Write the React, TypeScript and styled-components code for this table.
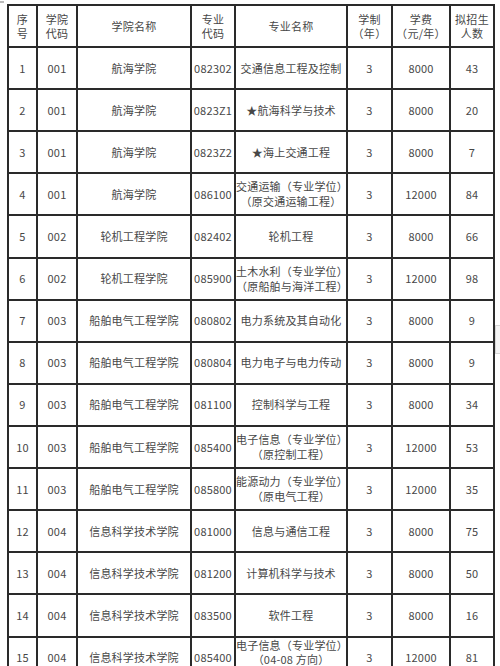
import styled, { createGlobalStyle } from 'styled-components';

const GlobalStyle = createGlobalStyle`
    html, body {
        margin: 0;
        padding: 0;
        background: #ffffff;
    }
    body {
        font-family: "Noto Sans CJK SC", "Noto Sans", sans-serif;
        color: #474747;
        overflow: hidden;
    }
`

const Page = styled.div`
    position: relative;
    width: 500px;
    height: 666px;
    padding: 4px 0 0 7px;
    box-sizing: border-box;
    overflow: hidden;
`

const Table = styled.table`
    border-collapse: collapse;
    table-layout: fixed;
    width: 486px;
    font-size: 11px;
`

const HeadCell = styled.th`
    border: 2px solid #2a2a2a;
    height: 42px;
    padding: 0;
    font-weight: 400;
    line-height: 14px;
    text-align: center;
    vertical-align: middle;
    white-space: pre;
    letter-spacing: 0.3px;
    box-sizing: border-box;
`

const Cell = styled.td<{ $lift?: boolean }>`
    border: 2px solid #2a2a2a;
    height: 42.12px;
    padding: 0;
    line-height: ${p => (p.$lift ? '14px' : '15px')};
    text-align: center;
    vertical-align: ${p => (p.$lift ? 'top' : 'middle')};
    white-space: pre;
    letter-spacing: 0.2px;
    box-sizing: border-box;
`

const Row = styled.tr``

const SideTab = styled.div`
    position: absolute;
    left: 495px;
    top: 325px;
    width: 10px;
    height: 27px;
    border: 1px solid #d6d6d6;
    background: #f4f4f4;
`

const Corner = styled.div`
    position: absolute;
    left: 0;
    top: 1px;
    width: 4px;
    height: 2px;
    background: #bbbbbb;
`

const widths = [29, 40, 114, 44, 112, 45, 58, 44];

const headers = ['序\n号', '学院\n代码', '学院名称', '专业\n代码', '专业名称', '学制\n（年）', '学费\n（元/年）', '拟招生\n人数'];

type Item = [string, string, string, string, string, string, string, string];

const rows: Item[] = [
    ['1', '001', '航海学院', '082302', '交通信息工程及控制', '3', '8000', '43'],
    ['2', '001', '航海学院', '0823Z1', '★航海科学与技术', '3', '8000', '20'],
    ['3', '001', '航海学院', '0823Z2', '★海上交通工程', '3', '8000', '7'],
    ['4', '001', '航海学院', '086100', '交通运输（专业学位）\n（原交通运输工程）', '3', '12000', '84'],
    ['5', '002', '轮机工程学院', '082402', '轮机工程', '3', '8000', '66'],
    ['6', '002', '轮机工程学院', '085900', '土木水利（专业学位）\n（原船舶与海洋工程）', '3', '12000', '98'],
    ['7', '003', '船舶电气工程学院', '080802', '电力系统及其自动化', '3', '8000', '9'],
    ['8', '003', '船舶电气工程学院', '080804', '电力电子与电力传动', '3', '8000', '9'],
    ['9', '003', '船舶电气工程学院', '081100', '控制科学与工程', '3', '8000', '34'],
    ['10', '003', '船舶电气工程学院', '085400', '电子信息（专业学位）\n（原控制工程）', '3', '12000', '53'],
    ['11', '003', '船舶电气工程学院', '085800', '能源动力（专业学位）\n（原电气工程）', '3', '12000', '35'],
    ['12', '004', '信息科学技术学院', '081000', '信息与通信工程', '3', '8000', '75'],
    ['13', '004', '信息科学技术学院', '081200', '计算机科学与技术', '3', '8000', '50'],
    ['14', '004', '信息科学技术学院', '083500', '软件工程', '3', '8000', '16'],
    ['15', '004', '信息科学技术学院', '085400', '电子信息（专业学位）\n（04-08 方向）', '3', '12000', '81'],
];

export default function App() {
    return (
        <Page>
            <GlobalStyle />
            <Corner />
            <Table>
                <colgroup>
                    {widths.map((w, i) => <col key={i} style={{ width: w }} />)}
                </colgroup>
                <thead>
                    <Row>
                        {headers.map(h => <HeadCell key={h}>{h}</HeadCell>)}
                    </Row>
                </thead>
                <tbody>
                    {rows.map((r, ri) => (
                        <Row key={r[0]}>
                            {r.map((c, ci) => (
                                <Cell key={ci} $lift={ri === 14 && ci === 4}>{c}</Cell>
                            ))}
                        </Row>
                    ))}
                </tbody>
            </Table>
            <SideTab />
        </Page>
    )
}
